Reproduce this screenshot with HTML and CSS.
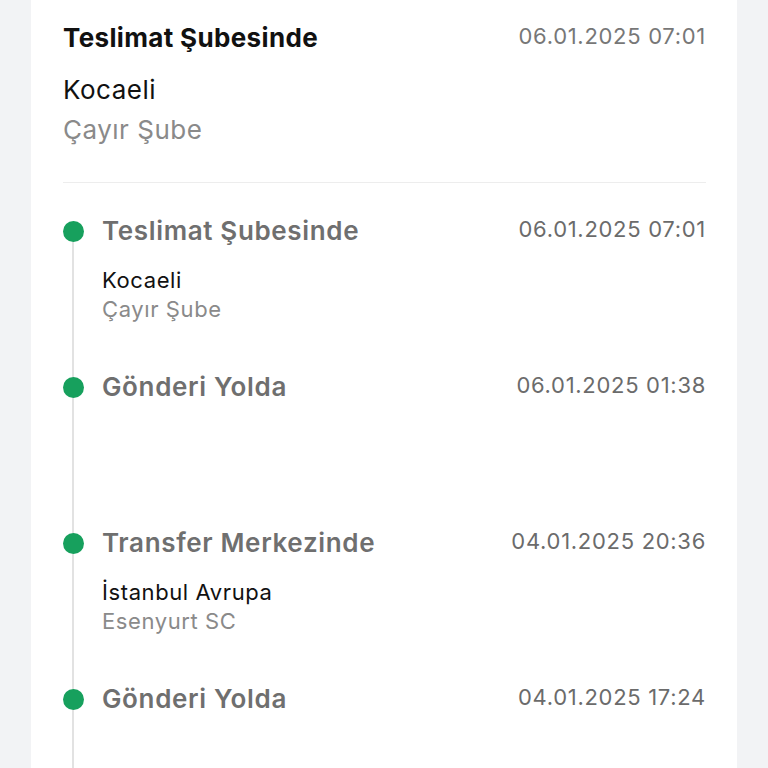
FILE: index.html
```html
<!DOCTYPE html>
<html lang="tr">
<head>
    <meta charset="UTF-8">
    <meta name="viewport" content="width=device-width, initial-scale=1.0">
    <title>Gönderi Takibi</title>
    <link rel="stylesheet" href="styles.css">
</head>
<body>

<div class="card">
    <!-- Son durum -->
    <div class="summary">
        <div class="summary-head">
            <span class="summary-title">Teslimat Şubesinde</span>
            <span class="summary-date">06.01.2025 07:01</span>
        </div>
        <div class="summary-city">Kocaeli</div>
        <div class="summary-branch">Çayır Şube</div>
    </div>

    <!-- Hareketler -->
    <ul class="timeline">
        <li class="step">
            <span class="dot"></span>
            <div class="step-body">
                <div class="step-head">
                    <span class="step-title">Teslimat Şubesinde</span>
                    <span class="step-date">06.01.2025 07:01</span>
                </div>
                <div class="step-city">Kocaeli</div>
                <div class="step-branch">Çayır Şube</div>
            </div>
        </li>
        <li class="step">
            <span class="dot"></span>
            <div class="step-body">
                <div class="step-head">
                    <span class="step-title">Gönderi Yolda</span>
                    <span class="step-date">06.01.2025 01:38</span>
                </div>
            </div>
        </li>
        <li class="step">
            <span class="dot"></span>
            <div class="step-body">
                <div class="step-head">
                    <span class="step-title">Transfer Merkezinde</span>
                    <span class="step-date">04.01.2025 20:36</span>
                </div>
                <div class="step-city">İstanbul Avrupa</div>
                <div class="step-branch">Esenyurt SC</div>
            </div>
        </li>
        <li class="step">
            <span class="dot"></span>
            <div class="step-body">
                <div class="step-head">
                    <span class="step-title">Gönderi Yolda</span>
                    <span class="step-date">04.01.2025 17:24</span>
                </div>
            </div>
        </li>
    </ul>
</div>

</body>
</html>
```

FILE: styles.css
```css
body {
    margin: 0;
    padding: 0;
    background-color: #f2f3f5;
    font-family: Inter, "Noto Sans", sans-serif;
    color: #111;
    height: 768px;
    overflow: hidden;
}

.card {
    margin: 0 31px;
    padding: 0 31px 0 32px;
    background-color: #fff;
    min-height: 768px;
}

.summary {
    padding-top: 22px;
    padding-bottom: 36px;
    border-bottom: 1px solid #ededed;
}

.summary-head,
.step-head {
    display: flex;
    justify-content: space-between;
    align-items: flex-start;
    line-height: 32px;
}

.summary-title {
    font-size: 26px;
    font-weight: 700;
    color: #111;
    letter-spacing: 0.35px;
}

.summary-date,
.step-date {
    font-size: 22px;
    line-height: 29px;
    color: #777;
    letter-spacing: 0.7px;
}

.summary-city {
    margin-top: 20px;
    font-size: 26px;
    line-height: 32px;
    color: #111;
    letter-spacing: 0.5px;
}

.summary-branch {
    margin-top: 8px;
    font-size: 26px;
    line-height: 32px;
    color: #8a8a8a;
    letter-spacing: 0.5px;
}

.timeline {
    list-style: none;
    margin: 0;
    padding: 32px 0 0;
}

.step {
    position: relative;
    display: flex;
    height: 156px;
}

.step::before {
    content: "";
    position: absolute;
    left: 9px;
    top: 12px;
    bottom: -12px;
    width: 2px;
    background-color: #e2e2e2;
}

.dot {
    position: relative;
    flex: none;
    width: 21px;
    height: 21px;
    margin-top: 6px;
    border-radius: 50%;
    background-color: #17a05d;
}

.step-body {
    flex: 1;
    margin-left: 18px;
}

.step-title {
    font-size: 26px;
    font-weight: 600;
    color: #6f6f6f;
    letter-spacing: 0.65px;
}

.step-date {
    color: #6b6b6b;
}

.step-city {
    margin-top: 20px;
    font-size: 22px;
    line-height: 26px;
    color: #111;
    letter-spacing: 0.6px;
}

.step-branch {
    margin-top: 3px;
    font-size: 22px;
    line-height: 26px;
    color: #8a8a8a;
    letter-spacing: 0.6px;
}
```
